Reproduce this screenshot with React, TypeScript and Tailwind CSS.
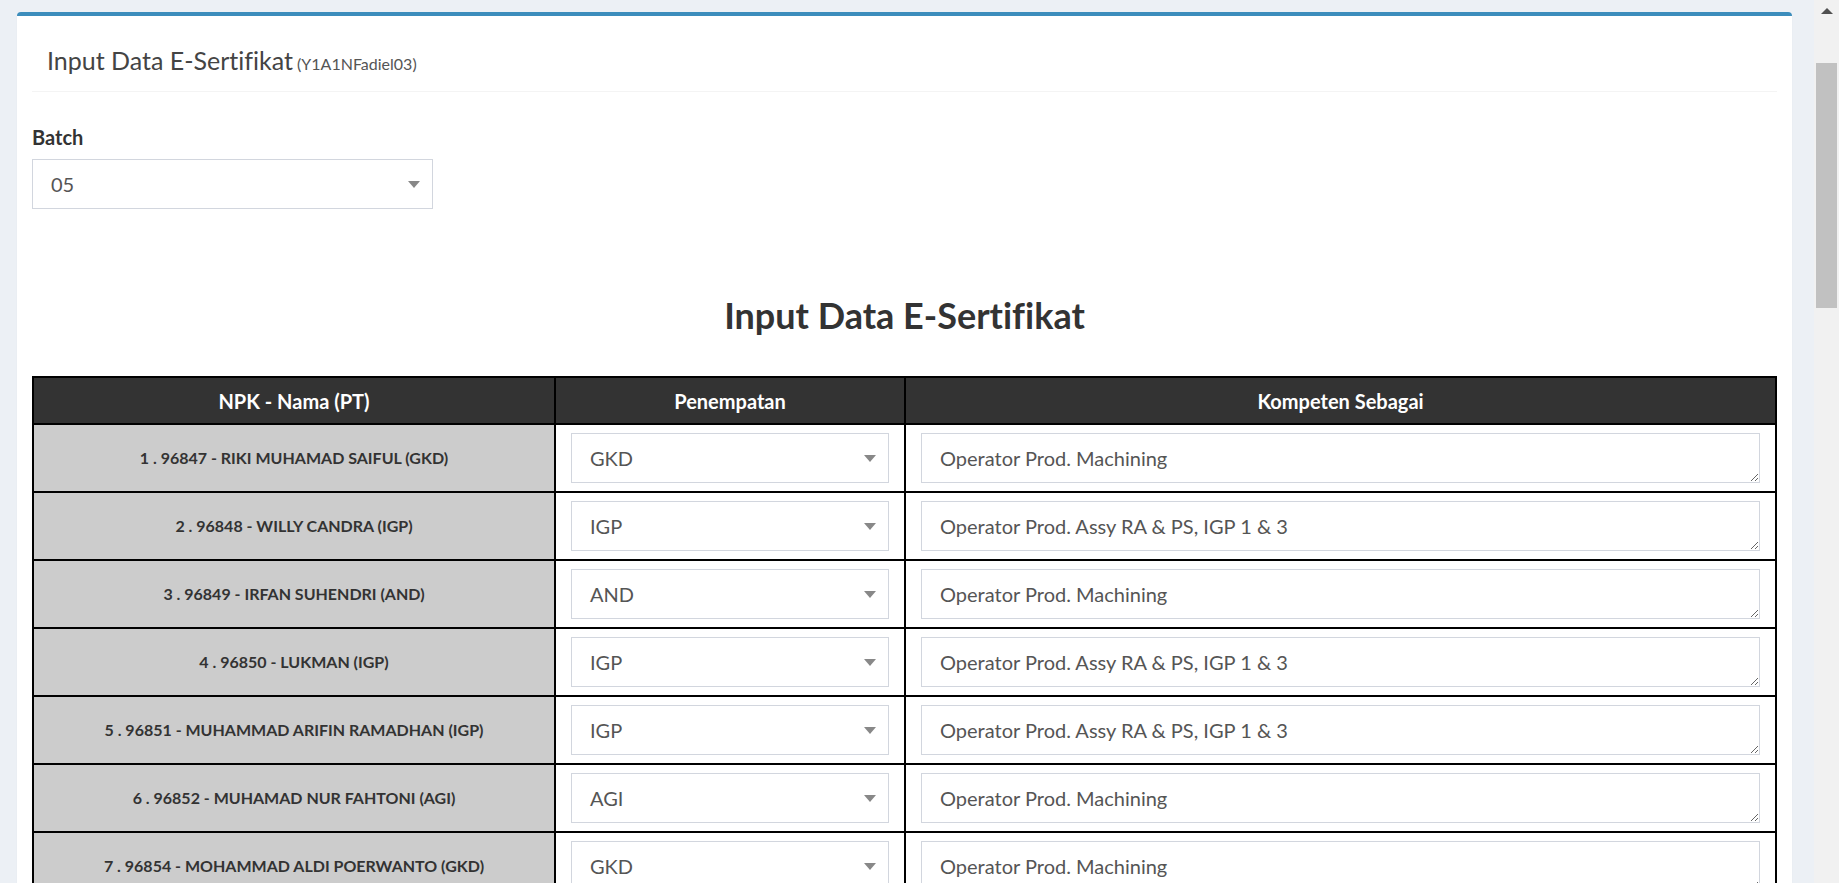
import React from "react";

const rows = [
  ["1 . 96847 - RIKI MUHAMAD SAIFUL (GKD)", "GKD", "Operator Prod. Machining"],
  ["2 . 96848 - WILLY CANDRA (IGP)", "IGP", "Operator Prod. Assy RA & PS, IGP 1 & 3"],
  ["3 . 96849 - IRFAN SUHENDRI (AND)", "AND", "Operator Prod. Machining"],
  ["4 . 96850 - LUKMAN (IGP)", "IGP", "Operator Prod. Assy RA & PS, IGP 1 & 3"],
  ["5 . 96851 - MUHAMMAD ARIFIN RAMADHAN (IGP)", "IGP", "Operator Prod. Assy RA & PS, IGP 1 & 3"],
  ["6 . 96852 - MUHAMAD NUR FAHTONI (AGI)", "AGI", "Operator Prod. Machining"],
  ["7 . 96854 - MOHAMMAD ALDI POERWANTO (GKD)", "GKD", "Operator Prod. Machining"],
  ["8 . 96855 - DIMAS PRASETYO (IGP)", "IGP", "Operator Prod. Machining"],
];

function Arrow() {
  return (
    <span className="w-0 h-0 border-l-[6px] border-r-[6px] border-t-[7px] border-l-transparent border-r-transparent border-t-[#888]" />
  );
}

function SelectBox({ value, className }: { value: string; className?: string }) {
  return (
    <div
      className={
        "flex items-center justify-between h-[50px] border border-[#d2d6de] bg-white pl-[18px] pr-[12px] text-[20px] text-[#555] " +
        (className ?? "")
      }
    >
      <span>{value}</span>
      <Arrow />
    </div>
  );
}

export default function App() {
  return (
    <div
      className="flex h-[883px] w-full overflow-hidden bg-[#ecf0f5] [font-variant-ligatures:none]"
      style={{ fontFamily: "Lato, 'Noto Sans', sans-serif" }}
    >
      <div className="flex-1 min-w-0 pl-[17px] pr-[22px] pt-[12px]">
        <div className="bg-white border-t-4 border-[#3c8dbc] rounded-t-[4px] shadow-[0_1px_1px_rgba(0,0,0,0.1)] h-[900px]">
          <div className="mx-[15px] border-b border-[#f4f4f4] h-[76px] pl-[15px] pt-[29px]">
            <span className="text-[25px] leading-[30px] text-[#444]">Input Data E-Sertifikat</span>
            <span className="text-[16px] text-[#555] ml-[4px]">(Y1A1NFadiel03)</span>
          </div>
          <div className="px-[15px]">
            <div className="mt-[30px] h-[30px] leading-[30px] text-[20px] font-bold text-[#333]">Batch</div>
            <SelectBox value="05" className="mt-[7px] w-[401px]" />
            <h3 className="mt-[84px] h-[44px] leading-[44px] text-center text-[36px] font-bold text-[#333]">
              Input Data E-Sertifikat
            </h3>
            <table className="mt-[39px] w-full table-fixed border-collapse">
              <colgroup>
                <col className="w-[522px]" />
                <col className="w-[350px]" />
                <col />
              </colgroup>
              <thead>
                <tr className="h-[47px] bg-[#333]">
                  <th className="border-2 border-black text-white text-[20px] font-bold">NPK - Nama (PT)</th>
                  <th className="border-2 border-black text-white text-[20px] font-bold">Penempatan</th>
                  <th className="border-2 border-black text-white text-[20px] font-bold">Kompeten Sebagai</th>
                </tr>
              </thead>
              <tbody>
                {rows.map((r, i) => (
                  <tr key={i} className="h-[68px]">
                    <td className="border-2 border-black bg-[#cccccc] text-center text-[16px] font-bold text-[#333]">
                      {r[0]}
                    </td>
                    <td className="border-2 border-black px-[15px] py-[7px]">
                      <SelectBox value={r[1]} />
                    </td>
                    <td className="border-2 border-black px-[15px] py-[7px]">
                      <textarea
                        readOnly
                        defaultValue={r[2]}
                        className="block w-full h-[50px] border border-[#d2d6de] bg-white pl-[18px] pt-[10px] text-[20px] leading-[28px] text-[#555] outline-none resize-y [font-variant-ligatures:none]"
                        style={{ fontFamily: "Lato, 'Noto Sans', sans-serif" }}
                      />
                    </td>
                  </tr>
                ))}
              </tbody>
            </table>
          </div>
        </div>
      </div>
      <div className="w-[25px] shrink-0 bg-[#f1f1f1] flex flex-col items-center">
        <span className="mt-[8px] w-0 h-0 border-l-[6px] border-r-[6px] border-b-[6px] border-l-transparent border-r-transparent border-b-[#505050]" />
        <div className="mt-[49px] w-[21px] h-[245px] bg-[#c1c1c1]" />
      </div>
    </div>
  );
}
